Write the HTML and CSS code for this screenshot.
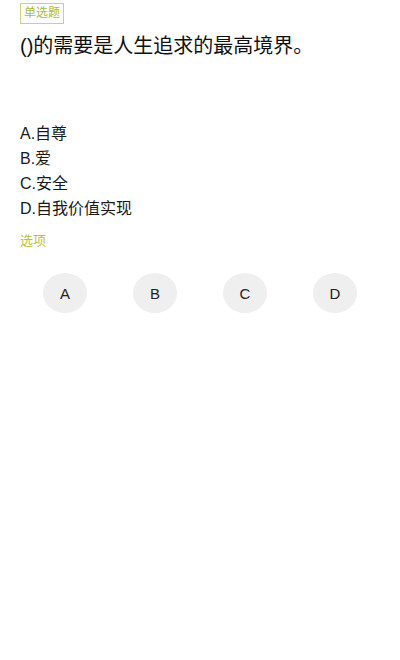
FILE: index.html
```html
<!DOCTYPE html>
<html lang="zh">
<head>
<meta charset="utf-8">
<link rel="stylesheet" href="styles.css">
</head>
<body>
<div class="page">
  <div class="badge">单选题</div>
  <div class="title">()的需要是人生追求的最高境界。</div>
  <ul class="options">
    <li>A.自尊</li>
    <li>B.爱</li>
    <li>C.安全</li>
    <li>D.自我价值实现</li>
  </ul>
  <div class="label">选项</div>
  <div class="choices">
    <div class="choice"><span class="dot">A</span></div>
    <div class="choice"><span class="dot">B</span></div>
    <div class="choice"><span class="dot">C</span></div>
    <div class="choice"><span class="dot">D</span></div>
  </div>
</div>
</body>
</html>
```
FILE: styles.css
```css
html, body {
  margin: 0;
  padding: 0;
  background: #ffffff;
}
.page {
  padding: 3px 20px 0;
  font-family: "Liberation Sans", "Noto Sans CJK SC", sans-serif;
  color: #111;
}
.badge {
  display: inline-block;
  border: 1px solid #c9d57c;
  padding: 0 3px;
  font-size: 12px;
  line-height: 19px;
  color: #a8bd3c;
}
.title {
  margin-top: 9px;
  font-size: 20px;
  line-height: 26px;
  color: #111;
}
.options {
  list-style: none;
  margin: 62px 0 0;
  padding: 0;
}
.options li {
  font-size: 16px;
  line-height: 25px;
  color: #1a1a1a;
}
.label {
  margin-top: 10px;
  font-size: 13px;
  line-height: 20px;
  color: #b3c33e;
}
.choices {
  margin-top: 22px;
  display: grid;
  grid-template-columns: repeat(4, 1fr);
}
.choice {
  display: flex;
  justify-content: center;
}
.dot {
  width: 44px;
  height: 40px;
  border-radius: 50%;
  background: #efefef;
  display: flex;
  align-items: center;
  justify-content: center;
  font-size: 15px;
  color: #222;
}
```
